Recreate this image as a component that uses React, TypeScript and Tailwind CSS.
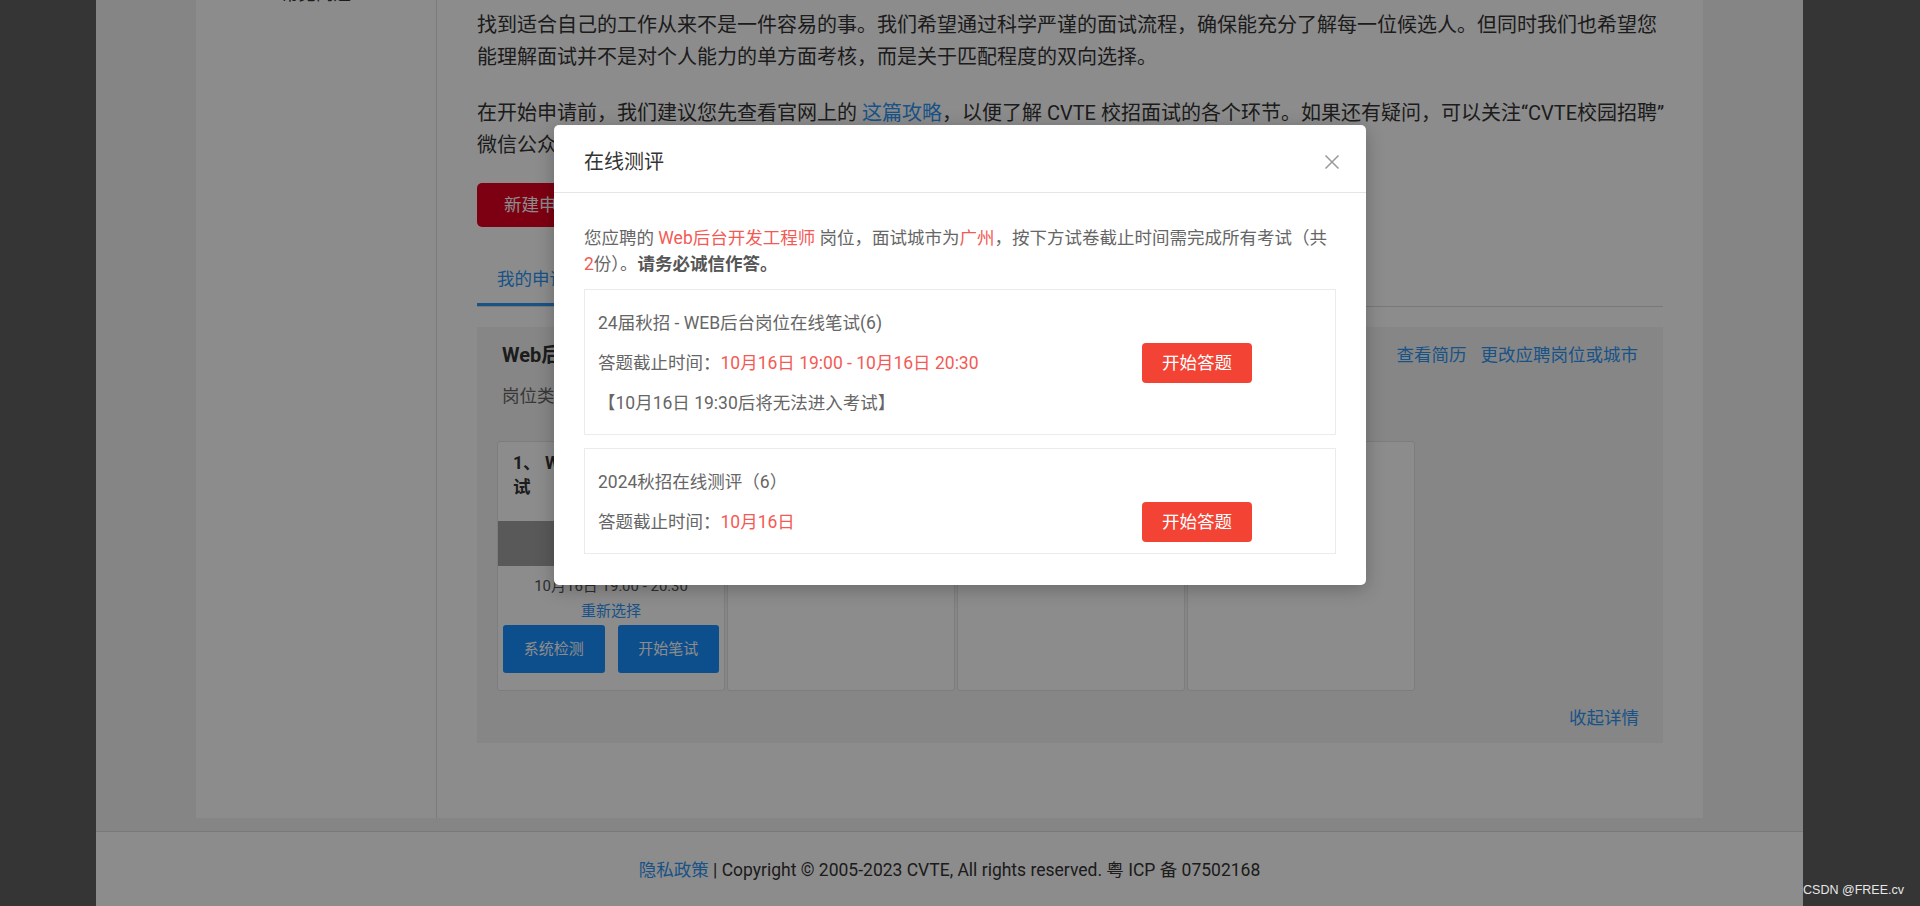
import React from "react";

const red = "text-[#f45a55]";

function StageCard({ children }: { children?: React.ReactNode }) {
  return (
    <div className="flex h-[250px] w-[228px] shrink-0 flex-col overflow-hidden rounded-[3px] border border-[#e3e3e3] bg-white">
      {children}
    </div>
  );
}

export default function App() {
  return (
    <div className="relative h-[906px] w-[1920px] overflow-hidden bg-[#626262] font-['Roboto','Noto_Sans_CJK_SC',sans-serif] text-[#333]">
      {/* page */}
      <div className="ml-[96px] flex h-full w-[1707px] flex-col bg-[#f2f2f2]">
        <div className="mx-[100px] flex h-[818px] shrink-0 bg-white">
          <aside className="w-[241px] shrink-0 border-r border-[#e0e0e0]">
            <div className="-mt-[18px] text-center text-[17.5px] leading-[24px] text-[#333]">常见问题</div>
          </aside>
          <main className="min-w-0 flex-1 px-[40px] pt-[9px]">
            <p className="whitespace-nowrap text-[20px] leading-[32px] text-[#333]">
              找到适合自己的工作从来不是一件容易的事。我们希望通过科学严谨的面试流程，确保能充分了解每一位候选人。但同时我们也希望您
              <br />
              能理解面试并不是对个人能力的单方面考核，而是关于匹配程度的双向选择。
            </p>
            <p className="mt-[24px] whitespace-nowrap text-[20px] leading-[32px] text-[#333]">
              在开始申请前，我们建议您先查看官网上的 <a className="text-[#2f95f5]">这篇攻略</a>，以便了解 CVTE 校招面试的各个环节。如果还有疑问，可以关注“CVTE校园招聘”
              <br />
              微信公众号咨询。
            </p>
            <button className="mt-[22px] h-[44px] w-[124px] rounded-[5px] bg-[#e30021] text-[17.5px] text-white">
              新建申请
            </button>
            <div className="mt-[28px] flex border-b border-[#dadada]">
              <div className="h-[51px] border-b-[3px] border-[#2f95f5] px-[20px] text-[17.5px] leading-[48px] text-[#2f95f5]">
                我的申请
              </div>
            </div>
            <div className="mt-[20px] bg-[#f5f5f5] px-[20px] pb-[12px] pt-[14px]">
              <div className="flex items-center justify-between px-[5px]">
                <h3 className="text-[20px] font-bold leading-[28px] text-[#333]">Web后台开发工程师</h3>
                <div className="flex gap-[14px] text-[17.5px] leading-[26px] text-[#2f95f5]">
                  <a>查看简历</a>
                  <a>更改应聘岗位或城市</a>
                </div>
              </div>
              <div className="mt-[14px] px-[5px] text-[17.5px] leading-[26px] text-[#666]">岗位类别：技术类</div>
              <div className="mt-[32px] flex gap-[2px]">
                <StageCard>
                  <div className="whitespace-nowrap px-[15px] pt-[9px] text-[17.5px] font-bold leading-[24px] text-[#333]">
                    1、 WEB后台岗位在线笔
                    <br />
                    试
                  </div>
                  <div className="mt-[22px] h-[45px] bg-[#a2a2a2]" />
                  <div className="mt-[9px] text-center text-[15px] leading-[22px] text-[#555]">10月16日 19:00 - 20:30</div>
                  <div className="mt-[3px] text-center text-[15px] leading-[22px] text-[#2f95f5]">重新选择</div>
                  <div className="mt-[3px] flex gap-[13px] px-[5px]">
                    <button className="h-[48px] flex-1 rounded-[3px] bg-[#1890ff] text-[15px] text-white">系统检测</button>
                    <button className="h-[48px] flex-1 rounded-[3px] bg-[#1890ff] text-[15px] text-white">开始笔试</button>
                  </div>
                </StageCard>
                <StageCard />
                <StageCard />
                <StageCard />
              </div>
              <div className="mt-[14px] pr-[4px] text-right text-[17.5px] leading-[26px] text-[#2f95f5]">收起详情</div>
            </div>
          </main>
        </div>
        <div className="h-[13px] shrink-0" />
        <footer className="flex h-[77px] shrink-0 items-center justify-center border-t border-[#dddddd] bg-white text-[17.5px] text-[#333]">
          <span>
            <a className="text-[#2f95f5]">隐私政策</a> | Copyright © 2005-2023 CVTE, All rights reserved. 粤 ICP 备 07502168
          </span>
        </footer>
      </div>

      {/* overlay */}
      <div className="absolute inset-0 bg-black/45" />

      {/* modal */}
      <div className="absolute left-[554px] top-[125px] w-[812px] rounded-[5px] bg-white shadow-[0_4px_18px_rgba(0,0,0,0.25)]">
        <div className="flex items-center justify-between border-b border-[#e5e5e5] pb-[16px] pl-[30px] pr-[26px] pt-[23px]">
          <h2 className="text-[20px] leading-[28px] text-[#333]">在线测评</h2>
          <svg width="16" height="16" viewBox="0 0 16 16" fill="none">
            <path d="M1.5 1.5 L14.5 14.5 M14.5 1.5 L1.5 14.5" stroke="#999" strokeWidth="1.5" />
          </svg>
        </div>
        <div className="px-[30px] pb-[31px] pt-[32px]">
          <p className="whitespace-nowrap text-[17.5px] leading-[26px] text-[#666]">
            您应聘的 <span className={red}>Web后台开发工程师</span> 岗位，面试城市为<span className={red}>广州</span>，按下方试卷截止时间需完成所有考试（共
            <br />
            <span className={red}>2</span>份）。<b className="font-bold text-[#555]">请务必诚信作答。</b>
          </p>
          <div className="mt-[12px] border border-[#ebebeb] px-[13px] pb-[11px] pt-[13px] text-[17.5px] text-[#666]">
            <div className="leading-[40px]">24届秋招 - WEB后台岗位在线笔试(6)</div>
            <div className="flex h-[40px] items-center">
              <div className="flex-1">
                答题截止时间：<span className={red}>10月16日 19:00 - 10月16日 20:30</span>
              </div>
              <button className="mr-[70px] h-[40px] w-[110px] rounded-[4px] bg-[#f24335] text-[17.5px] text-white">开始答题</button>
            </div>
            <div className="leading-[40px]">【10月16日 19:30后将无法进入考试】</div>
          </div>
          <div className="mt-[13px] border border-[#ebebeb] px-[13px] pb-[11px] pt-[13px] text-[17.5px] text-[#666]">
            <div className="leading-[40px]">2024秋招在线测评（6）</div>
            <div className="flex h-[40px] items-center">
              <div className="flex-1">
                答题截止时间：<span className={red}>10月16日</span>
              </div>
              <button className="mr-[70px] h-[40px] w-[110px] rounded-[4px] bg-[#f24335] text-[17.5px] text-white">开始答题</button>
            </div>
          </div>
        </div>
      </div>

      {/* watermark */}
      <div className="absolute bottom-[8px] right-[16px] font-['Liberation_Sans',sans-serif] text-[12.5px] leading-[15px] text-[#e6e6e6]">
        CSDN @FREE.cv
      </div>
    </div>
  );
}
